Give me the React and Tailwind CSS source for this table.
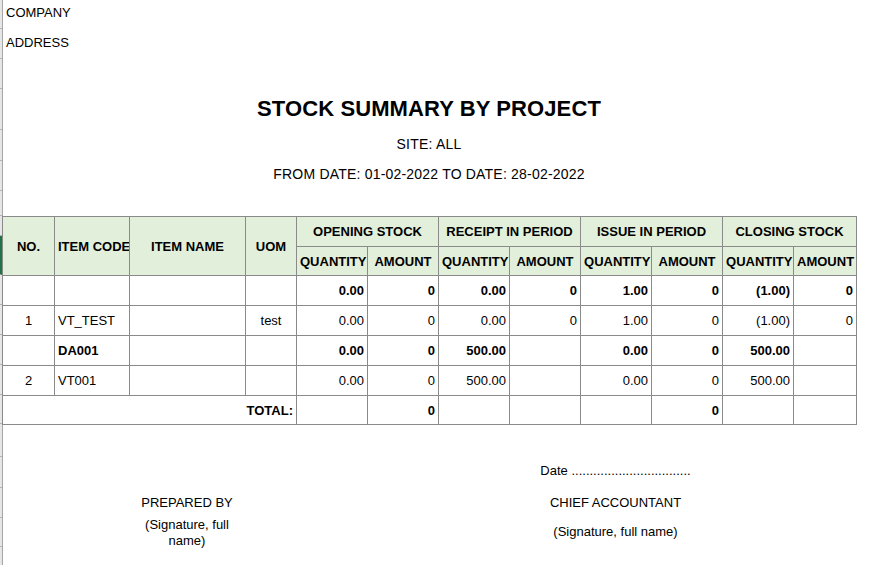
const rows = [
  { bold: true, cells: ["", "", "", "", "0.00", "0", "0.00", "0", "1.00", "0", "(1.00)", "0"] },
  { bold: false, cells: ["1", "VT_TEST", "", "test", "0.00", "0", "0.00", "0", "1.00", "0", "(1.00)", "0"] },
  { bold: true, cells: ["", "DA001", "", "", "0.00", "0", "500.00", "", "0.00", "0", "500.00", ""] },
  { bold: false, cells: ["2", "VT001", "", "", "0.00", "0", "500.00", "", "0.00", "0", "500.00", ""] },
]

const align = ["text-center", "text-left", "text-left", "text-center"]

const cell = "border border-[#8a8a8a] px-[3px] whitespace-nowrap overflow-hidden"
const head = cell + " bg-[#e2efda] font-bold text-center"

// row-header strip ticks on the left edge (sheet gutter)
const ticks = [29, 30, 30, 41, 31, 30, 25, 20]

export default function App() {
  return (
    <div className="flex w-[877px] h-[565px] overflow-hidden bg-white text-black font-['Liberation_Sans',Arial,sans-serif]">
      {/* Gutter */}
      <div className="flex flex-col w-[3px] shrink-0 bg-[#e6e6e6] border-r border-[#a6a6a6]">
        {ticks.map((h, i) => (
          <div key={i} className="border-b border-[#b4b4b4] shrink-0" style={{ height: h }}></div>
        ))}
        <div className="h-[39px] shrink-0 border-b border-[#b4b4b4] border-r-2 border-r-[#217346]"></div>
        {[30, 30, 30, 30, 29, 33, 31, 30, 29, 30].map((h, i) => (
          <div key={i} className="border-b border-[#b4b4b4] shrink-0" style={{ height: h }}></div>
        ))}
      </div>

      <div className="flex flex-col -ml-[1px]">
        <div className="h-[30px] pl-[4px] pt-[5px] text-[13px] leading-[15px]">COMPANY</div>
        <div className="h-[30px] pl-[4px] pt-[5px] text-[13px] leading-[15px]">ADDRESS</div>

        {/* Title */}
        <div className="w-[854px] text-center mt-[36px]">
          <div className="text-[22px] leading-[26px] font-bold tracking-[0.1px]">STOCK SUMMARY BY PROJECT</div>
          <div className="text-[14px] leading-[15px] mt-[15px] tracking-[0.2px]">SITE: ALL</div>
          <div className="text-[14px] leading-[15px] mt-[15px] tracking-[0.2px]">FROM DATE: 01-02-2022 TO DATE: 28-02-2022</div>
        </div>

        {/* Table */}
        <table className="table-fixed border-collapse w-[854px] mt-[34px] text-[13px] leading-[15px]">
          <colgroup>
            <col className="w-[52px]" />
            <col className="w-[75px]" />
            <col className="w-[116px]" />
            <col className="w-[51px]" />
            <col className="w-[71px]" />
            <col className="w-[71px]" />
            <col className="w-[71px]" />
            <col className="w-[71px]" />
            <col className="w-[71px]" />
            <col className="w-[71px]" />
            <col className="w-[71px]" />
            <col className="w-[63px]" />
          </colgroup>
          <thead>
            <tr className="h-[30px]">
              <th rowSpan={2} className={head}>NO.</th>
              <th rowSpan={2} className={head + " px-[1px]"}>ITEM CODE</th>
              <th rowSpan={2} className={head}>ITEM NAME</th>
              <th rowSpan={2} className={head}>UOM</th>
              <th colSpan={2} className={head}>OPENING STOCK</th>
              <th colSpan={2} className={head}>RECEIPT IN PERIOD</th>
              <th colSpan={2} className={head}>ISSUE IN PERIOD</th>
              <th colSpan={2} className={head}>CLOSING STOCK</th>
            </tr>
            <tr className="h-[29px]">
              {["QUANTITY", "AMOUNT", "QUANTITY", "AMOUNT", "QUANTITY", "AMOUNT", "QUANTITY", "AMOUNT"].map((t, i) => (
                <th key={i} className={head + " px-0"}>{t}</th>
              ))}
            </tr>
          </thead>
          <tbody>
            {rows.map((r, ri) => (
              <tr key={ri} className={"h-[30px] " + (r.bold ? "font-bold" : "")}>
                {r.cells.map((c, ci) => (
                  <td key={ci} className={cell + " " + (align[ci] || "text-right")}>{c}</td>
                ))}
              </tr>
            ))}
            <tr className="h-[29px] font-bold">
              <td colSpan={4} className={cell + " text-right"}>TOTAL:</td>
              <td className={cell}></td>
              <td className={cell + " text-right"}>0</td>
              <td className={cell}></td>
              <td className={cell}></td>
              <td className={cell}></td>
              <td className={cell + " text-right"}>0</td>
              <td className={cell}></td>
              <td className={cell}></td>
            </tr>
          </tbody>
        </table>

        {/* Signatures */}
        <div className="grid grid-cols-[52px_75px_116px_51px_71px_71px_71px_71px_71px_71px_71px_63px] grid-rows-[30px_32px_32px_30px] text-[13px] leading-[16px] items-center text-center">
          <div className="col-start-8 col-span-3 row-start-2">Date .................................</div>
          <div className="col-start-3 row-start-3">PREPARED BY</div>
          <div className="col-start-8 col-span-3 row-start-3">CHIEF ACCOUNTANT</div>
          <div className="col-start-3 row-start-4 px-[6px] -mt-[3px]">(Signature, full name)</div>
          <div className="col-start-8 col-span-3 row-start-4 -mt-[4px]">(Signature, full name)</div>
        </div>
      </div>
    </div>
  )
}
